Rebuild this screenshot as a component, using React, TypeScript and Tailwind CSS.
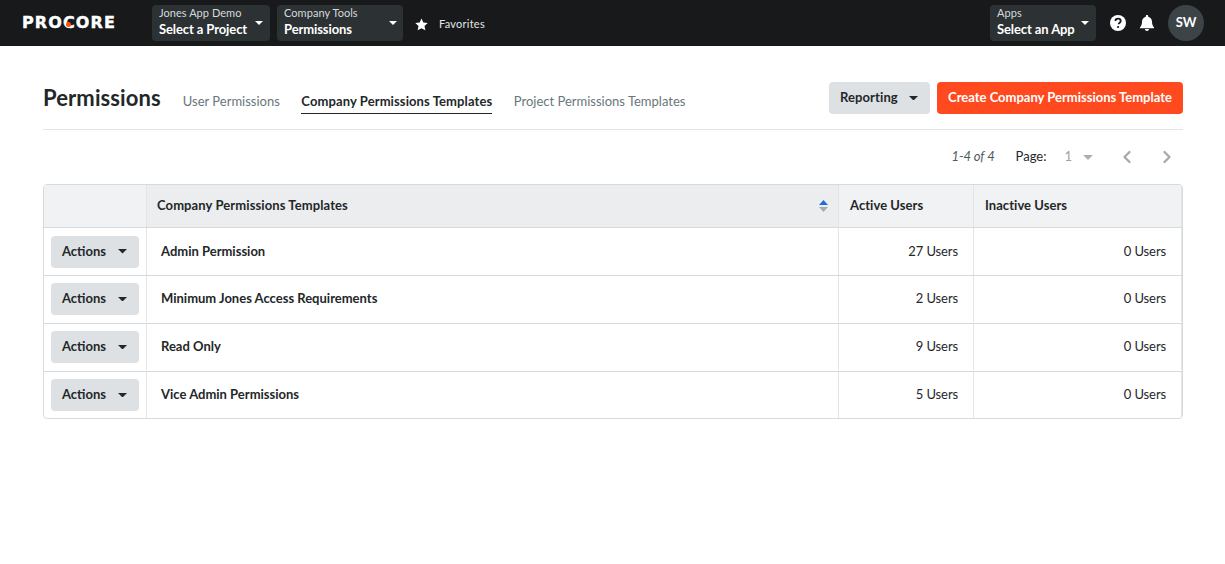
import React from "react";
import { ChevronLeft, ChevronRight } from "lucide-react";

const Caret = ({ className = "", w = 10 }: { className?: string; w?: number }) => (
  <svg width={w} height={w / 2} viewBox="0 0 10 5" className={className}>
    <path d="M0 0h10L5 5z" fill="currentColor" />
  </svg>
);

const NavSelect = ({ label, value, width, caretClass }: { label: string; value: string; width: string; caretClass: string }) => (
  <div className={`relative h-9 rounded bg-[#2c3134] pl-[7px] text-white ${width}`}>
    <div className="pt-[1px] text-[11px] leading-[14px] tracking-[0.05px] text-[#d6dadc]">{label}</div>
    <div className="mt-[1px] text-[13px] font-bold leading-[16px] tracking-[-0.1px]">{value}</div>
    <Caret w={8} className={`absolute top-[16px] text-white ${caretClass}`} />
  </div>
);

const rows = [
  ["Admin Permission", "27 Users", "h-[48px]"],
  ["Minimum Jones Access Requirements", "2 Users", "h-[48px] pb-[1px]"],
  ["Read Only", "9 Users", "h-[48px] pb-[1px]"],
  ["Vice Admin Permissions", "5 Users", "h-[46px]"],
];

export default function App() {
  return (
    <div className="h-[564px] w-[1225px] overflow-hidden bg-white font-['Lato','Open_Sans',sans-serif] text-[#232729]">
      <header className="flex h-[46px] items-center bg-[#17191b] pr-[21px]">
        <div className="relative ml-[22px] w-[130px] font-['DejaVu_Sans',sans-serif] text-[16px] font-bold leading-none tracking-[1.1px] text-white [-webkit-text-stroke:0.4px_white]">
          <span>PROCORE</span>
          <span className="absolute left-[44px] top-[7px] h-[5px] w-[5px] rounded-full bg-[#ff5100]" />
        </div>
        <NavSelect label="Jones App Demo" value="Select a Project" width="w-[118px]" caretClass="right-[7px]" />
        <div className="w-[7px]" />
        <NavSelect label="Company Tools" value="Permissions" width="w-[126px]" caretClass="right-[6px]" />
        <svg width="13" height="13" viewBox="0 0 24 24" className="ml-[12px] mt-[2px] text-white">
          <path fill="currentColor" d="M12 1l3.400 7.400 8.100.9-6 5.500 1.700 8L12 18.700 4.800 22.800l1.700-8-6-5.500 8.100-.9z" />
        </svg>
        <span className="ml-[11px] mt-[2px] text-[11px] tracking-[0.25px] text-[#e3e6e8]">Favorites</span>
        <div className="flex-1" />
        <NavSelect label="Apps" value="Select an App" width="w-[106px]" caretClass="right-[7px]" />
        <svg width="16" height="16" viewBox="0 0 16 16" className="ml-[14px]">
          <circle cx="8" cy="8" r="8" fill="#fff" />
          <path d="M5.400 6.100c0-1.500 1.100-2.400 2.700-2.400 1.500 0 2.600.9 2.600 2.200 0 1-.6 1.500-1.300 2-.6.4-.8.7-.8 1.300" fill="none" stroke="#17191b" strokeWidth="1.800" />
          <circle cx="8.100" cy="12" r="1.100" fill="#17191b" />
        </svg>
        <svg width="14" height="16" viewBox="0 0 14 16" className="ml-[14px]">
          <path fill="#fff" d="M7 0c.7 0 1.200.5 1.200 1.200v.5C10.500 2.300 12 4.200 12 6.500c0 3.500 1 4.700 2 5.700v1H0v-1c1-1 2-2.200 2-5.700 0-2.300 1.500-4.200 3.800-4.800v-.5C5.800.5 6.300 0 7 0zM5 14h4c0 1.100-.9 2-2 2s-2-.9-2-2z" />
        </svg>
        <div className="ml-[14px] flex h-9 w-9 items-center justify-center rounded-full bg-[#3c4448] text-[13px] font-bold text-white">SW</div>
      </header>

      <main className="px-[42px]">
        <div className="ml-[1px] mt-[36px] flex h-[48px] items-start border-b border-[#e2e4e6]">
          <h1 className="mt-[2px] text-[22px] font-bold leading-[28px] tracking-[0.1px] text-[#232729]">Permissions</h1>
          <nav className="ml-[22px] flex gap-[21.500px] text-[13px]">
            <span className="mt-[9px] leading-[20px] text-[#6a767c]">User Permissions</span>
            <span className="mt-[9px] h-[23px] border-b border-[#232729] font-bold leading-[20px] tracking-[0.1px] text-[#232729]">Company Permissions Templates</span>
            <span className="mt-[9px] leading-[20px] text-[#6a767c]">Project Permissions Templates</span>
          </nav>
          <div className="flex-1" />
          <button className="flex h-8 w-[101px] items-center justify-between rounded bg-[#dee1e4] pl-[11px] pr-[12px] text-[13px] font-bold tracking-[0.1px] text-[#232729]">
            Reporting
            <Caret w={9} />
          </button>
          <button className="ml-[7px] h-8 w-[246px] rounded bg-[#ff4a1f] text-[13px] font-bold text-white">
            Create Company Permissions Template
          </button>
        </div>

        <div className="ml-[1px] flex h-[54px] items-center justify-end text-[13px]">
          <span className="italic tracking-[-0.1px] text-[#4f5a60]">1-4 of 4</span>
          <span className="ml-[21px] mr-[1px] text-[#232729]">Page:</span>
          <span className="ml-[17px] text-[#9aa3a8]">1</span>
          <Caret className="ml-[11px] text-[#aab1b5]" />
          <ChevronLeft className="ml-[24px] text-[#a4abaf]" size={20} strokeWidth={2.800} />
          <ChevronRight className="ml-[20px] mr-[6px] text-[#a4abaf]" size={20} strokeWidth={2.800} />
        </div>

        <div className="ml-[1px] w-[1140px] overflow-hidden rounded border border-[#d6dadc] text-[13px]">
          <div className="grid h-[43px] grid-cols-[103px_692px_135px_1fr] border-b border-[#d6dadc] font-bold tracking-[0.1px]">
            <div className="border-r border-[#e2e4e6] bg-[#f1f2f4]" />
            <div className="flex items-center justify-between border-r border-[#e2e4e6] bg-[#ebedef] pl-[10px] pr-[10px]">
              <span>Company Permissions Templates</span>
              <svg width="9" height="12" viewBox="0 0 9 12">
                <path d="M0 5h9L4.500 0z" fill="#1d6be0" />
                <path d="M0 7h9L4.500 12z" fill="#a4abaf" />
              </svg>
            </div>
            <div className="flex items-center border-r border-[#e2e4e6] bg-[#f1f2f4] pl-[11px] tracking-[0.05px]">Active Users</div>
            <div className="flex items-center border-r border-[#e2e4e6] bg-[#f1f2f4] pl-[11px] tracking-[0.05px]">Inactive Users</div>
          </div>
          {rows.map(([name, active, h], i) => (
            <div key={name} className={`grid grid-cols-[103px_692px_135px_1fr] ${h} ${i < 3 ? "border-b border-[#d6dadc]" : ""}`}>
              <div className="flex items-center border-r border-[#e2e4e6] pl-[7px]">
                <button className="flex h-8 w-[88px] items-center justify-between rounded bg-[#dee1e4] pl-[11px] pr-[12px] font-bold">
                  Actions
                  <Caret w={9} />
                </button>
              </div>
              <div className="flex items-center border-r border-[#e2e4e6] pl-[14px] font-bold">{name}</div>
              <div className="flex items-center justify-end border-r border-[#e2e4e6] pr-[15px] tracking-[-0.1px]">{active}</div>
              <div className="flex items-center justify-end border-r border-[#e2e4e6] pr-[15px] tracking-[-0.1px]">0 Users</div>
            </div>
          ))}
        </div>
      </main>
    </div>
  );
}
